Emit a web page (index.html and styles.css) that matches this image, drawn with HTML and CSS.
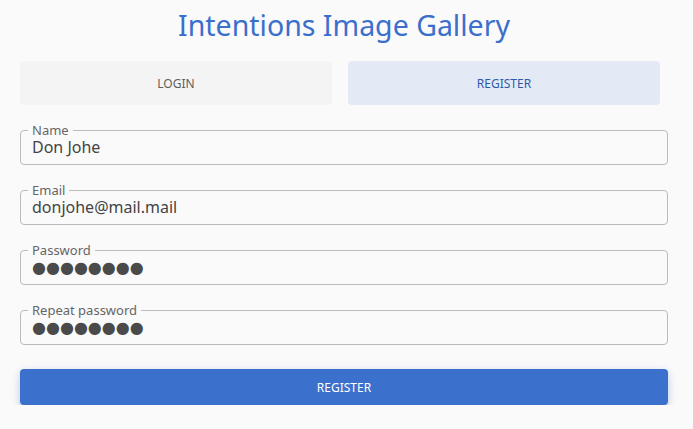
FILE: index.html
```html
<!DOCTYPE html>
<html lang="en">
<head>
<meta charset="utf-8">
<title>Intentions Image Gallery</title>
<link rel="stylesheet" href="styles.css">
</head>
<body>
<main class="page">
  <h1 class="title">Intentions Image Gallery</h1>
  <nav class="tabs">
    <div class="tab">Login</div>
    <div class="tab tab-active">Register</div>
  </nav>
  <form class="form">
    <fieldset class="field">
      <legend class="field-label">Name</legend>
      <div class="field-value">Don Johe</div>
    </fieldset>
    <fieldset class="field">
      <legend class="field-label">Email</legend>
      <div class="field-value">donjohe@mail.mail</div>
    </fieldset>
    <fieldset class="field">
      <legend class="field-label">Password</legend>
      <div class="field-value field-dots">●●●●●●●●</div>
    </fieldset>
    <fieldset class="field">
      <legend class="field-label">Repeat password</legend>
      <div class="field-value field-dots">●●●●●●●●</div>
    </fieldset>
    <div class="submit">Register</div>
  </form>
</main>
</body>
</html>
```
FILE: styles.css
```css
html, body {
  margin: 0;
  padding: 0;
  background: #fafafa;
}
body {
  font-family: "Noto Sans", "Open Sans", sans-serif;
  color: #444;
}
.page {
  width: 648px;
  padding: 7px 0 0 20px;
  display: flex;
  flex-direction: column;
}
.title {
  margin: 0;
  font-size: 28.5px;
  line-height: 36px;
  font-weight: 400;
  color: #3b6fcc;
  text-align: center;
}
.tabs {
  margin-top: 18px;
  width: 640px;
  display: grid;
  grid-template-columns: 1fr 1fr;
  gap: 16px;
}
.tab {
  height: 44px;
  display: flex;
  align-items: center;
  justify-content: center;
  border-radius: 4px;
  background: #f4f4f4;
  color: #5e5e5e;
  font-size: 12px;
  text-transform: uppercase;
}
.tab-active {
  background: #e3eaf6;
  color: #2d5aaa;
}
.form {
  margin-top: 18px;
  display: flex;
  flex-direction: column;
  gap: 18px;
}
.field {
  margin: 0;
  padding: 0 11px 7px 11px;
  border: 1px solid #bbb;
  border-radius: 4px;
  min-width: 0;
}
.field-label {
  margin-left: -4px;
  padding: 0 4px;
  font-size: 13px;
  line-height: 14px;
  color: #666;
}
.field-value {
  padding-top: 1px;
  font-size: 16px;
  line-height: 19px;
  color: #444;
  white-space: nowrap;
}
.field-dots {
  font-family: "DejaVu Sans", sans-serif;
  font-size: 16px;
  letter-spacing: 0;
  color: #4a4a4a;
}
.submit {
  margin-top: 6px;
  height: 36px;
  display: flex;
  align-items: center;
  justify-content: center;
  border-radius: 4px;
  background: #3b70cc;
  color: #fff;
  font-size: 12px;
  text-transform: uppercase;
  box-shadow: 0 3px 8px rgba(59, 112, 204, 0.35);
}
```
